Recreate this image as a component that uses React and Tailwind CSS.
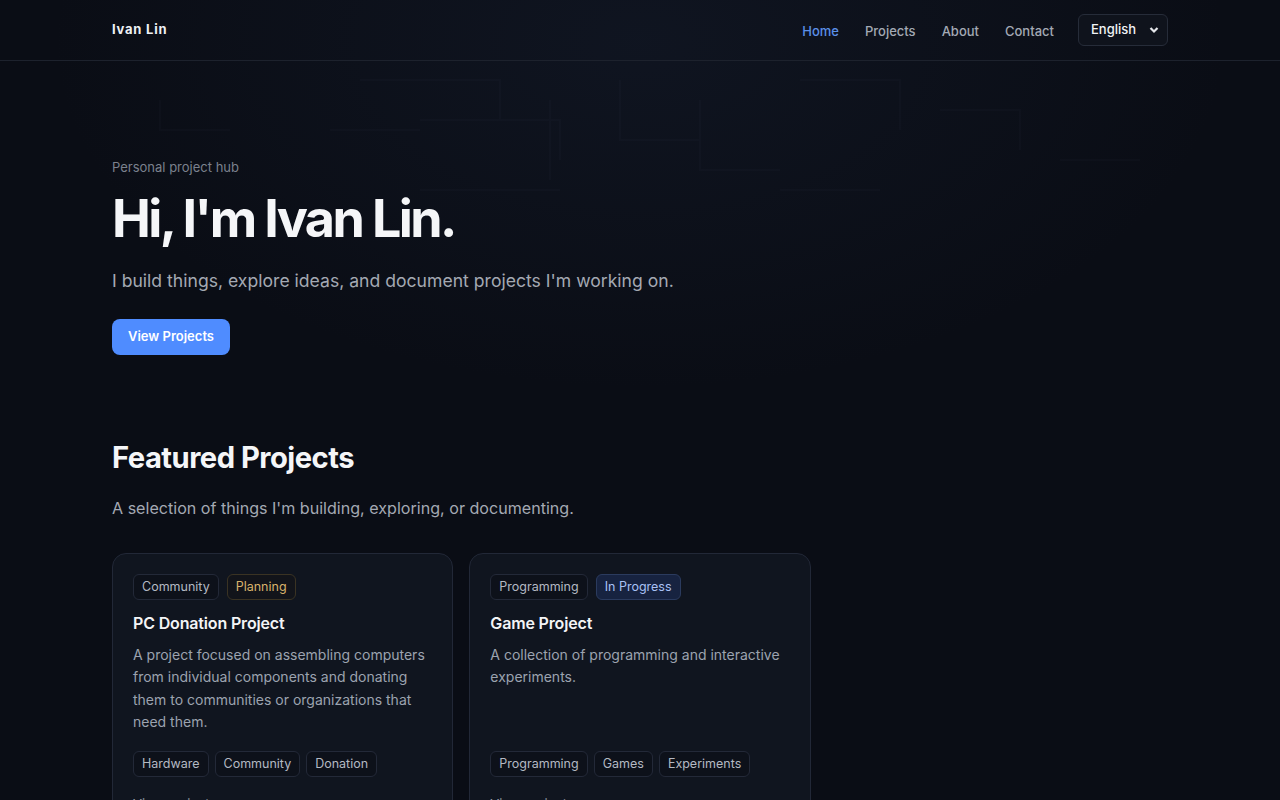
import React from "react";

const font = { fontFamily: "Inter, 'Noto Sans', sans-serif" };

function Tag({ children, variant }) {
  const base = "inline-flex items-center h-[26px] px-[8px] rounded-[6px] border text-[12.5px] leading-none";
  const styles =
    variant === "planning"
      ? "border-[#3a3323] bg-[#12141a] text-[#d9b36c]"
      : variant === "progress"
      ? "border-[#2b3b5e] bg-[#172340] text-[#a9c1f5]"
      : "border-[#232938] bg-[#0d111a] text-[#b4b9c3]";
  return <span className={`${base} ${styles}`}>{children}</span>;
}

function Card({ top, title, desc, tags }) {
  return (
    <div className="rounded-[14px] border border-[#222837] bg-[#10151f] p-[20px] flex flex-col">
      <div className="flex gap-[8px]">
        {top.map((t) => (
          <Tag key={t.label} variant={t.variant}>{t.label}</Tag>
        ))}
      </div>
      <h3 className="mt-[11px] text-[16px] font-semibold text-[#f3f4f6] tracking-[-0.01em] leading-[24px]">{title}</h3>
      <p className="mt-[9px] text-[14px] leading-[22.4px] text-[#9ca3af] h-[90px]">{desc}</p>
      <div className="mt-[17px] flex gap-[6px]">
        {tags.map((t) => (
          <Tag key={t}>{t}</Tag>
        ))}
      </div>
      <div className="mt-[18px] text-[13px] text-[#9ca3af]">View project →</div>
    </div>
  );
}

export default function App() {
  return (
    <div style={font} className="min-h-[800px] h-[800px] overflow-hidden bg-[#0a0d15] text-white relative">
      <div className="absolute inset-x-0 top-0 h-[420px] pointer-events-none bg-[radial-gradient(ellipse_at_50%_10%,rgba(40,55,85,0.18),transparent_65%)]" />
      <svg className="absolute left-0 top-[60px] pointer-events-none opacity-[0.025]" width="1280" height="140" viewBox="0 0 1280 140" fill="none" stroke="#8aa0c8" strokeWidth="2">
        <path d="M360 20 H500 V60 M420 60 H560 V100 M550 40 V120 M620 20 V80 H700 M700 40 V110 H780 M800 20 H900 V70 M420 130 H560 M780 130 H880 M940 50 H1020 V90 M1060 100 H1140 M160 40 V70 H230 M330 70 H420" />
      </svg>
      <header className="relative border-b border-[#1d222d] h-[61px]">
        <div className="mx-auto w-[1056px] h-[60px] flex items-center justify-between">
          <div className="text-[13px] font-bold tracking-[0.06em] text-[#eef0f4]">Ivan Lin</div>
          <nav className="flex items-center">
            <a className="mt-[3px] text-[13px] font-medium text-[#5b8fe8] mr-[26px]">Home</a>
            <a className="mt-[3px] text-[13px] font-medium text-[#a3a9b4] mr-[26px]">Projects</a>
            <a className="mt-[3px] text-[13px] font-medium text-[#a3a9b4] mr-[26px]">About</a>
            <a className="mt-[3px] text-[13px] font-medium text-[#a3a9b4] mr-[24px]">Contact</a>
            <div className="w-[90px] h-[32px] rounded-[6px] border border-[#262c39] bg-[#0f131c] flex items-center justify-between pl-[12px] pr-[8px]">
              <span className="text-[13px] font-medium text-[#f1f3f6]">English</span>
              <svg width="10" height="10" viewBox="0 0 10 10"><path d="M1.5 3 L5 6.5 L8.5 3" stroke="#e5e7eb" strokeWidth="2.2" fill="none" /></svg>
            </div>
          </nav>
        </div>
      </header>
      <main className="relative mx-auto w-[1056px]">
        <section className="pt-[97px]">
          <p className="text-[13px] text-[#7b818d] leading-[18px]">Personal project hub</p>
          <h1 className="mt-[14px] text-[52px] font-bold tracking-[-0.05em] leading-[57px] text-[#f5f6f8]">Hi, I'm Ivan Lin.</h1>
          <p className="mt-[20px] text-[17.6px] text-[#a4a9b3] leading-[28px]">I build things, explore ideas, and document projects I'm working on.</p>
          <button className="mt-[24px] h-[36px] px-[16px] rounded-[8px] bg-[#4f8cff] text-[13px] font-semibold text-white">View Projects</button>
        </section>
        <section className="pt-[85px]">
          <h2 className="text-[29.2px] font-bold tracking-[-0.018em] leading-[36px] text-[#f5f6f8]">Featured Projects</h2>
          <p className="mt-[20px] text-[16.1px] text-[#a4a9b3] leading-[24px]">A selection of things I'm building, exploring, or documenting.</p>
          <div className="mt-[33px] grid grid-cols-3 gap-[16px]">
            <Card
              top={[{ label: "Community" }, { label: "Planning", variant: "planning" }]}
              title="PC Donation Project"
              desc="A project focused on assembling computers from individual components and donating them to communities or organizations that need them."
              tags={["Hardware", "Community", "Donation"]}
            />
            <Card
              top={[{ label: "Programming" }, { label: "In Progress", variant: "progress" }]}
              title="Game Project"
              desc="A collection of programming and interactive experiments."
              tags={["Programming", "Games", "Experiments"]}
            />
          </div>
        </section>
      </main>
    </div>
  );
}
